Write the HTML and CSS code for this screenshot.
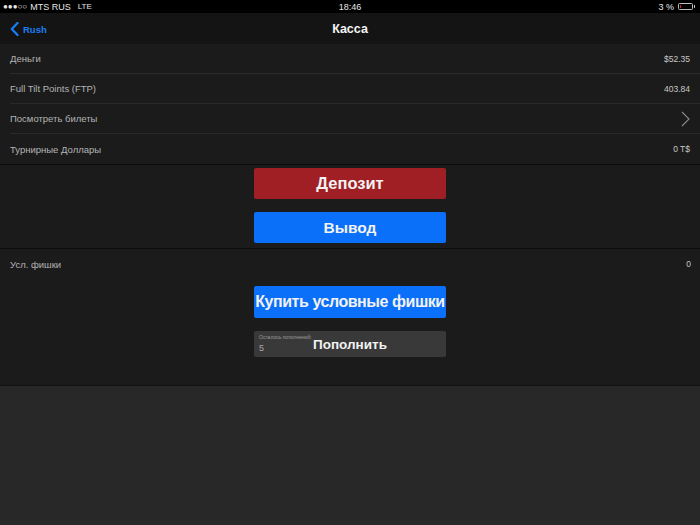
FILE: index.html
```html
<!DOCTYPE html>
<html>
<head>
<meta charset="utf-8">
<link rel="stylesheet" href="styles.css">
</head>
<body>
<div class="status">
  <div class="st-left"><span class="dots">●●●○○</span> MTS RUS <span class="lte">LTE</span></div>
  <div class="st-time">18:46</div>
  <div class="st-right">3 % <span class="battery"><span class="bat-fill"></span></span><span class="bat-tip"></span></div>
</div>
<div class="nav">
  <div class="back">
    <svg width="9" height="14" viewBox="0 0 9 14"><path d="M7.5 1 L1.8 7 L7.5 13" fill="none" stroke="#1a7ef5" stroke-width="2.2" stroke-linecap="round" stroke-linejoin="round"/></svg>
    <span>Rush</span>
  </div>
  <div class="title">Касса</div>
</div>
<div class="section top">
  <div class="row"><span>Деньги</span><span class="val">$52.35</span></div>
  <div class="row"><span>Full Tilt Points (FTP)</span><span class="val">403.84</span></div>
  <div class="row"><span>Посмотреть билеты</span>
    <svg class="chev" width="9" height="16" viewBox="0 0 9 16"><path d="M1 1 L8 8 L1 15" fill="none" stroke="#8a8a8a" stroke-width="1.1"/></svg>
  </div>
  <div class="row last"><span>Турнирные Доллары</span><span class="val">0 T$</span></div>
</div>
<div class="section buttons">
  <div class="btn red">Депозит</div>
  <div class="btn blue">Вывод</div>
</div>
<div class="section chips">
  <div class="row plain"><span>Усл. фишки</span><span class="val">0</span></div>
  <div class="btn blue buy">Купить условные фишки</div>
  <div class="btn gray refill">
    <div class="remain"><span class="rl">Осталось пополнений:</span><span class="rn">5</span></div>
    <span>Пополнить</span>
  </div>
</div>
</body>
</html>
```
FILE: styles.css
```css
* { box-sizing: border-box; }
html, body { margin: 0; padding: 0; }
body {
  width: 700px;
  height: 525px;
  background: #282828;
  font-family: "Liberation Sans", Arial, sans-serif;
  color: #c8c8c8;
  overflow: hidden;
}
.status {
  height: 13px;
  background: #000;
  display: flex;
  align-items: center;
  justify-content: space-between;
  padding: 0 5px 0 3px;
  font-size: 9px;
  color: #e6e6e6;
  position: relative;
}
.st-left { display: flex; align-items: center; gap: 3px; }
.dots { font-size: 8px; letter-spacing: 0; }
.lte { font-size: 8px; margin-left: 4px; }
.st-time {
  position: absolute;
  left: 0; right: 0;
  text-align: center;
  font-size: 9px;
}
.st-right { display: flex; align-items: center; gap: 4px; }
.battery {
  width: 15px;
  height: 7px;
  border: 1px solid #bdbdbd;
  border-radius: 1.5px;
  display: flex;
  padding: 1px;
}
.bat-fill { width: 1px; background: #d02020; }
.bat-tip { width: 1px; height: 3px; background: #bdbdbd; margin-left: -3px; }
.nav {
  height: 31px;
  background: #141414;
  display: flex;
  align-items: center;
  position: relative;
}
.back {
  display: flex;
  align-items: center;
  gap: 4px;
  margin-left: 10px;
  color: #1a7ef5;
  font-weight: bold;
  font-size: 9.5px;
  margin-top: 1px;
}
.title {
  position: absolute;
  left: 0; right: 0;
  text-align: center;
  font-weight: bold;
  font-size: 12.5px;
  color: #f4f4f4;
  margin-top: 1px;
}
.section { background: #1b1b1b; }
.top { border-bottom: 1px solid #0c0c0c; }
.row {
  height: 30px;
  margin-left: 10px;
  padding-right: 10px;
  display: flex;
  align-items: center;
  justify-content: space-between;
  border-bottom: 1px solid #2a2a2a;
  font-size: 9.5px;
  color: #b4b4b4;
}
.row.last { border-bottom: none; }
.row.plain { border-bottom: none; padding-right: 9px; }
.val { font-size: 8.5px; color: #c8c8c8; }
.buttons {
  display: flex;
  flex-direction: column;
  align-items: center;
  gap: 13px;
  padding: 3px 0 5px;
  border-bottom: 1px solid #0c0c0c;
}
.btn {
  width: 192px;
  height: 31px;
  border-radius: 2px;
  display: flex;
  align-items: center;
  justify-content: center;
  font-weight: bold;
  font-size: 15.5px;
  color: #f2f2f2;
  white-space: nowrap;
}
.red { background: #a01f25; font-size: 16.5px; }
.blue { background: #0a6ff9; }
.chips {
  height: 137px;
  display: flex;
  flex-direction: column;
  align-items: center;
  border-bottom: 1px solid #111;
}
.chips .row { align-self: stretch; }
.buy { margin-top: 7px; height: 32px; font-size: 16px; letter-spacing: -0.45px; }
.gray {
  background: #393939;
  margin-top: 13px;
  height: 26px;
  position: relative;
  font-size: 13.5px;
}
.remain {
  position: absolute;
  left: 5px;
  top: 4px;
  display: flex;
  flex-direction: column;
  font-weight: normal;
  line-height: 1;
  letter-spacing: 0;
}
.rl { font-size: 5px; color: #9a9a9a; }
.rn { font-size: 9px; color: #a8a8a8; margin-top: 4px; }
```
